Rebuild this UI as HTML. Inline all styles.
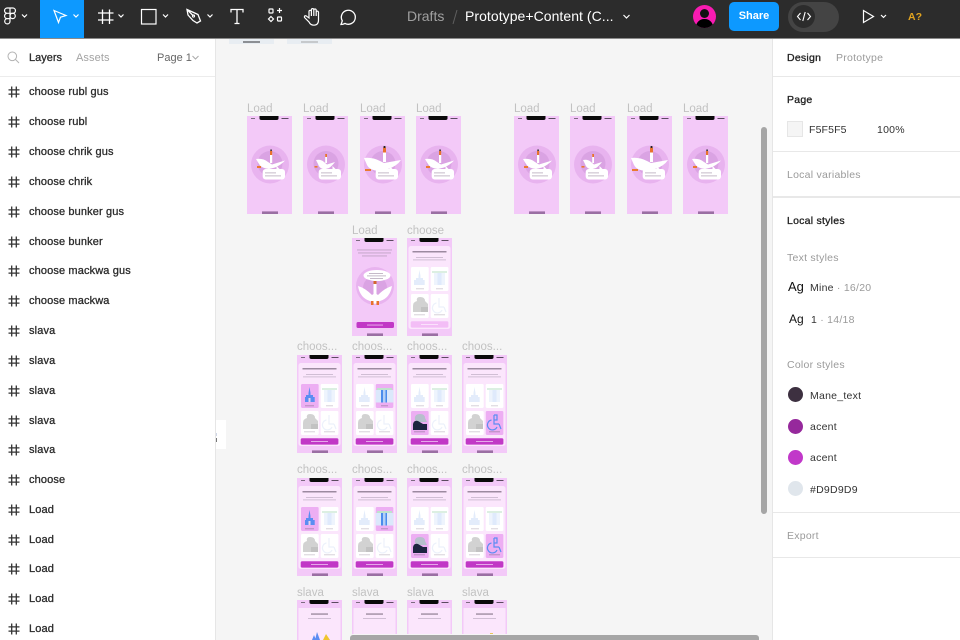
<!DOCTYPE html>
<html><head><meta charset="utf-8">
<style>
html,body{margin:0;padding:0;width:960px;height:640px;overflow:hidden;background:#f5f5f5;font-family:"Liberation Sans",sans-serif}
.a{position:absolute;white-space:nowrap}
#top{left:0;top:0;width:960px;height:38px;background:#2c2c2c;border-bottom:1px solid #8a8a8a}
#left{left:0;top:39px;width:215px;height:601px;background:#fff;border-right:1px solid #e6e6e6}
#right{left:772px;top:39px;width:188px;height:601px;background:#fff;border-left:1px solid #e6e6e6}
.l{left:29px;font-size:11px;line-height:14px;color:#2b2b2b;-webkit-text-stroke:.3px #2b2b2b;letter-spacing:.13px}
.h{left:7px;width:14px;height:14px}
.lab{font-size:11.5px;line-height:13px;color:#c2c2c2;letter-spacing:0}
.r{font-size:10.5px;line-height:14px;color:#333;letter-spacing:.25px}
.g{color:#9a9a9a}
.b{color:#222;-webkit-text-stroke:.3px #222}
.sep{left:773px;width:187px;height:1px;background:#e8e8e8}
</style></head><body>

<svg width="0" height="0" style="position:absolute">
<defs>
<symbol id="hash" viewBox="0 0 14 14"><path d="M4.7 1.5V12.5M9.3 1.5V12.5M1.5 4.9H12.5M1.5 9.1H12.5" stroke="#333" stroke-width="1.3" fill="none"/></symbol>

<g id="top">
<rect width="45" height="98" fill="#f3c9f8"/>
<path d="M12.5 0H31.5V2.5Q31.5 4 29.5 4H14.5Q12.5 4 12.5 2.5Z" fill="#0a0a0a"/>
<rect x="4" y="2" width="4" height="1" fill="#7c6a80"/>
<rect x="34.5" y="2" width="7" height="1" fill="#5b4a60"/>
<rect x="15" y="95.4" width="16" height="2.6" fill="#9a6fa3"/>
</g>

<g id="bub">
<rect x="15.7" y="53" width="22.3" height="10.5" rx="3" fill="#fff"/>
<path d="M29.5 53.5V50L33 53.5Z" fill="#fff"/>
<rect x="18" y="56.5" width="11" height=".8" fill="#b7a9bb"/>
<rect x="18" y="59.5" width="16" height=".8" fill="#b7a9bb"/>
</g>

<g id="gus">
<use href="#top"/>
<circle cx="23" cy="48.5" r="19" fill="#e8b3ef"/>
<circle cx="23" cy="47.5" r="12.5" fill="#daa3e3"/>
<path d="M9 43Q16 42 21 46L25 48.5L38 44.5Q34 49 28 51.5L22 53Q14 52 12 48Z" fill="#fff"/>
<rect x="23" y="37" width="2.2" height="10" fill="#fff"/>
<rect x="23" y="35" width="2.2" height="4" fill="#e8722c"/>
<rect x="23.3" y="33.5" width="1.6" height="1.5" fill="#333"/>
<rect x="10" y="50" width="4" height="2" fill="#ea7a2f"/>
<use href="#bub"/>
</g>

<g id="gus2">
<use href="#top"/>
<circle cx="23" cy="48.5" r="19" fill="#e8b3ef"/>
<circle cx="23" cy="47.5" r="12.5" fill="#daa3e3"/>
<path d="M13 44Q18 43 21 46L24 48.5L32 46Q29 50 26 52L21 53.5Q16 52 15 48Z" fill="#fff"/>
<rect x="22.2" y="39" width="1.8" height="8" fill="#fff"/>
<rect x="22.2" y="38" width="1.8" height="3" fill="#e8722c"/>
<rect x="11.5" y="50" width="3" height="1.6" fill="#ea7a2f"/>
<use href="#bub"/>
</g>

<g id="gus3">
<use href="#top"/>
<circle cx="23" cy="48.5" r="19" fill="#e8b3ef"/>
<circle cx="23" cy="47.5" r="12.5" fill="#daa3e3"/>
<path d="M4 42Q12 41 20 45L24 47L41 44Q37 50 28 53L21 55Q10 55 7 49Z" fill="#fff"/>
<rect x="23" y="33" width="3" height="13" fill="#fff"/>
<rect x="23" y="31.5" width="3" height="5" fill="#e8722c"/>
<rect x="23.6" y="30" width="1.8" height="2" fill="#222"/>
<rect x="5" y="53" width="6" height="2" fill="#ea7a2f"/>
<use href="#bub"/>
</g>

<g id="load2">
<use href="#top"/>
<rect x="5" y="11.5" width="35" height=".9" fill="#bfa3c4"/>
<rect x="6" y="14.5" width="33" height=".9" fill="#bfa3c4"/>
<rect x="10" y="17.5" width="25" height=".9" fill="#bfa3c4"/>
<circle cx="23" cy="48" r="19" fill="#e8b3ef"/>
<circle cx="23" cy="50" r="12" fill="#daa3e3"/>
<path d="M6 48Q13 50 20 57L23 55L26 57Q33 50 40 48Q38 60 28 63L23 66L18 63Q8 60 6 48Z" fill="#fff"/>
<rect x="21.5" y="44" width="3" height="13" fill="#fff"/>
<rect x="21.5" y="43" width="3" height="3" fill="#d2682e"/>
<rect x="19" y="63" width="2.5" height="4" fill="#e8722c"/><rect x="24.5" y="63" width="2.5" height="4" fill="#e8722c"/>
<ellipse cx="25" cy="37.5" rx="13.5" ry="5.5" fill="#fff"/>
<rect x="17" y="35" width="14" height=".8" fill="#b7a9bb"/>
<rect x="15" y="37.5" width="19" height=".8" fill="#b7a9bb"/>
<rect x="18" y="40" width="13" height=".8" fill="#b7a9bb"/>
<rect x="4.5" y="84" width="37.5" height="6" rx="1.5" fill="#c138c6"/>
<rect x="15" y="86.6" width="16" height=".9" fill="#eab4ee"/>
</g>

<g id="ch">
<use href="#top"/>
<rect x="1.5" y="8" width="42" height="83" rx="2.5" fill="#fbe6fc"/>
<rect x="5.5" y="13.2" width="34" height="1.2" fill="#857489"/>
<rect x="9" y="19" width="27" height=".8" fill="#c6b5ca"/>
<rect x="6" y="21.5" width="33" height=".8" fill="#c6b5ca"/>
<rect x="4" y="29" width="17.7" height="24" rx="1.2" fill="#fff"/>
<rect x="23.7" y="29" width="17.7" height="24" rx="1.2" fill="#fff"/>
<rect x="4" y="56" width="17.7" height="24" rx="1.2" fill="#fff"/>
<rect x="23.7" y="56" width="17.7" height="24" rx="1.2" fill="#fff"/>
<!-- church -->
<path d="M12.5 32L13.5 38V40H16V42H17.7V47H7V42H9V40H11.5V38Z" fill="#e3ecfb"/>
<!-- shop -->
<rect x="25" y="33" width="15" height="2" fill="#dcefe2"/>
<rect x="27" y="35" width="11" height="12" fill="#eef4fd"/>
<rect x="30.5" y="35" width="4" height="12" fill="#dfeafc"/>
<!-- man -->
<path d="M6 74V68Q6 64 10 63Q9 59 13 59Q18 59 18 63L21 66V74Z" fill="#d2d2d2"/>
<rect x="14" y="69" width="7" height="5" fill="#c2c2c2"/>
<!-- chair -->
<path d="M32 60V69H37M29.5 65A5 5 0 1 0 35 72M37 69L39 74" stroke="#ecf1fb" stroke-width="1.2" fill="none"/>
<rect x="9" y="50.5" width="8" height=".7" fill="#c5bcc9"/>
<rect x="29" y="50.5" width="7" height=".7" fill="#c5bcc9"/>
<rect x="7" y="76.5" width="11" height=".7" fill="#c5bcc9"/>
<rect x="27" y="76.5" width="11" height=".7" fill="#c5bcc9"/>
</g>

<g id="btn"><rect x="3.7" y="83.3" width="37.7" height="6.3" rx="1.5" fill="#c138c6"/><rect x="14" y="86" width="17" height=".9" fill="#eab4ee"/></g>

<g id="c0">
<use href="#ch"/><use href="#btn"/>
<rect x="4" y="29" width="17.7" height="24" rx="1.2" fill="#edaef3"/>
<path d="M12.5 32L13.5 38V40H16V42H17.7V47H8V42H9V40H11.5V38Z" fill="#5b8df2"/>
<rect x="11.5" y="43" width="2" height="4" fill="#e8d3f0"/>
<rect x="8" y="50.5" width="9" height=".7" fill="#9a7ca2"/>
</g>
<g id="c1">
<use href="#ch"/><use href="#btn"/>
<rect x="23.7" y="29" width="17.7" height="24" rx="1.2" fill="#edaef3"/>
<rect x="23.7" y="35" width="17.7" height="12.5" fill="#dbe8fb"/>
<rect x="25" y="33" width="15" height="2" fill="#bfe2cd"/>
<rect x="29" y="35" width="6" height="12.5" fill="#4a8cec"/>
<rect x="31" y="35" width="2.5" height="12.5" fill="#b2cff7"/>
<rect x="29" y="50.5" width="7" height=".7" fill="#9a7ca2"/>
</g>
<g id="c2">
<use href="#ch"/><use href="#btn"/>
<rect x="4" y="56" width="17.7" height="24" rx="1.2" fill="#edaef3"/>
<path d="M8 65Q7 59 13 59Q18 59 18 63L20 67H10Z" fill="#b6bfcc"/>
<path d="M6 75V69Q7 65 11 66L16 69H20V75Z" fill="#1d2440"/>
<rect x="7" y="76.5" width="11" height=".7" fill="#9a7ca2"/>
</g>
<g id="c3">
<use href="#ch"/><use href="#btn"/>
<rect x="23.7" y="56" width="17.7" height="24" rx="1.2" fill="#edaef3"/>
<path d="M32 60H35V65H32M32 60V69H37M29.5 65A5 5 0 1 0 35 72M37 69L39 74" stroke="#5b8df2" stroke-width="1.2" fill="none"/>
<rect x="27" y="76.5" width="11" height=".7" fill="#9a7ca2"/>
</g>
<g id="cd">
<use href="#ch"/>
<rect x="3.7" y="83.3" width="37.7" height="6.3" rx="1.5" fill="#f3bdf6"/>
<rect x="14" y="86" width="17" height=".9" fill="#fbe6fc"/>
</g>
<g id="sl">
<rect width="45" height="40" fill="#f3c9f8"/>
<path d="M12.5 0H31.5V2.5Q31.5 4 29.5 4H14.5Q12.5 4 12.5 2.5Z" fill="#0a0a0a"/>
<rect x="4" y="2" width="4" height="1" fill="#7c6a80"/>
<rect x="34.5" y="2" width="7" height="1" fill="#5b4a60"/>
<rect x="1.5" y="8" width="42" height="32" fill="#fbe6fc"/>
<rect x="14" y="13.5" width="17" height="1.1" fill="#857489"/>
<rect x="11" y="18" width="23" height=".8" fill="#c6b5ca"/>
</g>
</defs>
</svg>

<!-- canvas -->
<div class="a" style="left:229px;top:39px;width:45px;height:5px;background:#e8edf2"></div>
<div class="a" style="left:243px;top:41px;width:17px;height:2px;background:#8c8f94"></div>
<div class="a" style="left:287px;top:39px;width:45px;height:5px;background:#e8edf2"></div>
<div class="a" style="left:301px;top:41px;width:17px;height:2px;background:#c6c9cc"></div>

<div class="a lab" style="left:247px;top:103px">Load</div>
<div class="a lab" style="left:303px;top:103px">Load</div>
<div class="a lab" style="left:360px;top:103px">Load</div>
<div class="a lab" style="left:416px;top:103px">Load</div>
<div class="a lab" style="left:514px;top:103px">Load</div>
<div class="a lab" style="left:570px;top:103px">Load</div>
<div class="a lab" style="left:627px;top:103px">Load</div>
<div class="a lab" style="left:683px;top:103px">Load</div>
<div class="a lab" style="left:352px;top:225px">Load</div>
<div class="a lab" style="left:407px;top:225px">choose</div>
<div class="a lab" style="left:297px;top:341px">choos...</div>
<div class="a lab" style="left:352px;top:341px">choos...</div>
<div class="a lab" style="left:407px;top:341px">choos...</div>
<div class="a lab" style="left:462px;top:341px">choos...</div>
<div class="a lab" style="left:297px;top:464px">choos...</div>
<div class="a lab" style="left:352px;top:464px">choos...</div>
<div class="a lab" style="left:407px;top:464px">choos...</div>
<div class="a lab" style="left:462px;top:464px">choos...</div>
<div class="a lab" style="left:297px;top:587px">slava</div>
<div class="a lab" style="left:352px;top:587px">slava</div>
<div class="a lab" style="left:407px;top:587px">slava</div>
<div class="a lab" style="left:462px;top:587px">slava</div>

<svg class="a" style="left:0;top:0;filter:blur(.35px)" width="960" height="640">
<use href="#gus" x="247" y="116"/><use href="#gus2" x="303" y="116"/><use href="#gus3" x="360" y="116"/><use href="#gus" x="416" y="116"/>
<use href="#gus" x="514" y="116"/><use href="#gus2" x="570" y="116"/><use href="#gus3" x="627" y="116"/><use href="#gus" x="683" y="116"/>
<use href="#load2" x="352" y="238"/><use href="#cd" x="407" y="238"/>
<use href="#c0" x="297" y="355"/><use href="#c1" x="352" y="355"/><use href="#c2" x="407" y="355"/><use href="#c3" x="462" y="355"/>
<use href="#c0" x="297" y="478"/><use href="#c1" x="352" y="478"/><use href="#c2" x="407" y="478"/><use href="#c3" x="462" y="478"/>
<use href="#sl" x="297" y="600"/><use href="#sl" x="352" y="600"/><use href="#sl" x="407" y="600"/><use href="#sl" x="462" y="600"/>
<path d="M315 640L317 632L320 640ZM312 640L314 635L316 640Z" fill="#5b8df2"/>
<path d="M323 640L326 634L330 640Z" fill="#f0c52d"/>
<path d="M422 640Q429 628 437 640Z" fill="#7a97b8"/>
<rect x="482" y="634" width="10" height="6" fill="#3f6fc4"/>
<rect x="490" y="633" width="3" height="7" fill="#e9c65a"/>
</svg>

<div class="a" style="left:216px;top:420px;width:10px;height:29px;background:#fff"></div>
<div class="a" style="left:215px;top:433px;width:2px;height:3px;background:#cfd6e6"></div>
<div class="a" style="left:215px;top:438px;width:2px;height:4px;background:#777"></div>

<!-- scrollbars -->
<div class="a" style="left:761px;top:127px;width:6px;height:387px;border-radius:3px;background:#a6a6a6;box-shadow:0 0 0 1px #f5f5f5"></div>
<div class="a" style="left:350px;top:635px;width:409px;height:5px;border-radius:3px 3px 0 0;background:#a6a6a6;box-shadow:0 0 0 1px #f5f5f5"></div>

<!-- top bar -->
<div class="a" id="top"></div>
<div class="a" style="left:40px;top:0;width:44px;height:38px;background:#0d99ff"></div>
<svg class="a" style="left:0;top:0" width="960" height="38" fill="none" stroke="#fff" stroke-width="1.2">
<!-- figma logo -->
<path d="M10 8H7.2A2.65 2.65 0 0 0 7.2 13.3H10ZM10 8H12.8A2.65 2.65 0 0 1 12.8 13.3H10ZM10 13.3H7.2A2.65 2.65 0 0 0 7.2 18.6H10ZM7.2 18.6H10V21.2A2.65 2.65 0 1 1 7.2 18.6Z" stroke-width="1.2"/>
<circle cx="12.65" cy="15.95" r="2.65"/>
<path d="M22 14.5L24.5 17L27 14.5M73.5 14.5L76 17L78.5 14.5M118.5 14.5L121 17L123.5 14.5M163 14.5L165.5 17L168 14.5M207.5 14.5L210 17L212.5 14.5"/>
<!-- arrow -->
<path d="M54 10.5L66 15.5L60.5 17.2L58.5 22.5Z"/>
<!-- frame -->
<path d="M102.5 9.5V24M109.5 9.5V24M98 13H113.5M98 20H113.5" stroke-width="1.3"/>
<!-- rect -->
<rect x="141.5" y="9.5" width="14.5" height="14.5"/>
<!-- pen -->
<path d="M187 9.5L198 14.5L200.5 21L197 23L193 20.5L188 15ZM187 9.5L193.5 16M193 20.5L197 23" stroke-width="1.3"/><circle cx="193.5" cy="16" r="1.1" stroke-width="1"/>
<!-- T -->
<path d="M231 12.5V9.5H243V12.5M237 9.5V23.5M234.5 23.5H239.5" stroke-width="1.3"/>
<!-- resources -->
<rect x="269" y="9" width="4" height="4" rx=".6"/>
<path d="M279.5 8V13M277 10.5H282"/>
<path d="M271 16.5L273.5 19L271 21.5L268.5 19Z"/>
<rect x="277.5" y="17" width="4" height="4" rx=".6"/>
<!-- hand -->
<path d="M309 16V11.5A1.2 1.2 0 0 1 311.4 11.5V16M311.4 16V9.8A1.2 1.2 0 0 1 313.8 9.8V16M313.8 16V10.2A1.2 1.2 0 0 1 316.2 10.2V16M316.2 16V12A1.2 1.2 0 0 1 318.5 12V20Q318.5 25 314 25.2Q310.5 25.2 309 22L304.5 17.5Q304 15.5 306 15.8L309 18V16" stroke-width="1.2"/>
<!-- comment -->
<path d="M341 24.5L342.3 20.8A7 7 0 1 1 345 23.4Q343 24.5 341 24.5Z" stroke-width="1.3"/>
<!-- play -->
<path d="M863.5 10.5V22.5L873.5 16.5Z" stroke-width="1.2"/>
<path d="M881 15L883.5 17.4L886 15"/>
</svg>
<div class="a" style="left:407px;top:7px;font-size:14px;line-height:18px;color:#a0a0a0">Drafts</div>
<svg class="a" style="left:450px;top:9px" width="10" height="18"><path d="M7 1L3 15" stroke="#5f5f5f" stroke-width="1"/></svg>
<div class="a" style="left:465px;top:7px;font-size:14px;line-height:19px;color:#fff;letter-spacing:.05px">Prototype+Content (C...</div>
<!-- avatar -->
<div class="a" style="left:693px;top:5px;width:23px;height:23px;border-radius:50%;background:#f81bb2;overflow:hidden">
<div style="position:absolute;left:7px;top:4px;width:9px;height:9px;border-radius:50%;background:#111"></div>
<div style="position:absolute;left:3px;top:14px;width:17px;height:9px;border-radius:8px 8px 0 0;background:#000"></div>
</div>
<div class="a" style="left:729px;top:2px;width:50px;height:29px;border-radius:5px;background:#0d99ff;color:#fff;font-size:11px;font-weight:bold;line-height:29px;text-align:center">Share</div>
<div class="a" style="left:788px;top:2px;width:51px;height:30px;border-radius:15px;background:#444"></div>
<div class="a" style="left:792px;top:5px;width:23px;height:23px;border-radius:50%;background:#2c2c2c"></div>
<svg class="a" style="left:796px;top:9px" width="16" height="15" fill="none" stroke="#fff" stroke-width="1.1"><path d="M4.5 4L1.5 7.5L4.5 11M11.5 4L14.5 7.5L11.5 11M9.2 3L6.8 12"/></svg>
<div class="a" style="left:908px;top:10px;font-size:10.5px;line-height:14px;color:#e2a41f;font-weight:bold">A?</div>
<svg class="a" style="left:622px;top:12px" width="12" height="10" fill="none" stroke="#fff" stroke-width="1.2"><path d="M1.5 3L4.5 6L7.5 3"/></svg>

<!-- left panel -->
<div class="a" id="left"></div>
<div class="a" style="left:0;top:76px;width:215px;height:1px;background:#ececec"></div>
<svg class="a" style="left:7px;top:51px" width="13" height="13" fill="none" stroke="#b4b4b4" stroke-width="1"><circle cx="5.3" cy="5.3" r="4.3"/><path d="M8.4 8.4L12 12"/></svg>
<div class="a l" style="left:29px;top:51px;letter-spacing:0">Layers</div>
<div class="a" style="left:76px;top:51px;font-size:11px;line-height:14px;color:#a3a3a3;letter-spacing:.1px">Assets</div>
<div class="a" style="left:157px;top:51px;font-size:11px;line-height:14px;color:#666;letter-spacing:0">Page 1</div>
<svg class="a" style="left:191px;top:54px" width="9" height="8" fill="none" stroke="#aaa" stroke-width="1"><path d="M1.5 2L4.5 5L7.5 2"/></svg>

<svg class="a h" style="top:85px"><use href="#hash"/></svg><div class="a l" style="top:85px">choose rubl gus</div>
<svg class="a h" style="top:115px"><use href="#hash"/></svg><div class="a l" style="top:115px">choose rubl</div>
<svg class="a h" style="top:145px"><use href="#hash"/></svg><div class="a l" style="top:145px">choose chrik gus</div>
<svg class="a h" style="top:175px"><use href="#hash"/></svg><div class="a l" style="top:175px">choose chrik</div>
<svg class="a h" style="top:205px"><use href="#hash"/></svg><div class="a l" style="top:205px">choose bunker gus</div>
<svg class="a h" style="top:235px"><use href="#hash"/></svg><div class="a l" style="top:235px">choose bunker</div>
<svg class="a h" style="top:264px"><use href="#hash"/></svg><div class="a l" style="top:264px">choose mackwa gus</div>
<svg class="a h" style="top:294px"><use href="#hash"/></svg><div class="a l" style="top:294px">choose mackwa</div>
<svg class="a h" style="top:324px"><use href="#hash"/></svg><div class="a l" style="top:324px">slava</div>
<svg class="a h" style="top:354px"><use href="#hash"/></svg><div class="a l" style="top:354px">slava</div>
<svg class="a h" style="top:384px"><use href="#hash"/></svg><div class="a l" style="top:384px">slava</div>
<svg class="a h" style="top:414px"><use href="#hash"/></svg><div class="a l" style="top:414px">slava</div>
<svg class="a h" style="top:443px"><use href="#hash"/></svg><div class="a l" style="top:443px">slava</div>
<svg class="a h" style="top:473px"><use href="#hash"/></svg><div class="a l" style="top:473px">choose</div>
<svg class="a h" style="top:503px"><use href="#hash"/></svg><div class="a l" style="top:503px">Load</div>
<svg class="a h" style="top:533px"><use href="#hash"/></svg><div class="a l" style="top:533px">Load</div>
<svg class="a h" style="top:562px"><use href="#hash"/></svg><div class="a l" style="top:562px">Load</div>
<svg class="a h" style="top:592px"><use href="#hash"/></svg><div class="a l" style="top:592px">Load</div>
<svg class="a h" style="top:622px"><use href="#hash"/></svg><div class="a l" style="top:622px">Load</div>

<!-- right panel -->
<div class="a" id="right"></div>
<div class="a sep" style="top:76px"></div>
<div class="a sep" style="top:151px"></div>
<div class="a sep" style="top:196px;height:2px"></div>
<div class="a sep" style="top:512px"></div>
<div class="a sep" style="top:557px"></div>
<div class="a r b" style="left:787px;top:51px">Design</div>
<div class="a r g" style="left:836px;top:51px">Prototype</div>
<div class="a r b" style="left:787px;top:93px">Page</div>
<div class="a" style="left:787px;top:121px;width:14px;height:14px;background:#f5f5f5;border:1px solid #e6e6e6"></div>
<div class="a r" style="left:809px;top:123px;letter-spacing:.15px">F5F5F5</div>
<div class="a r" style="left:877px;top:123px">100%</div>
<div class="a r g" style="left:787px;top:168px">Local variables</div>
<div class="a r b" style="left:787px;top:214px">Local styles</div>
<div class="a r g" style="left:787px;top:251px">Text styles</div>
<div class="a" style="left:788px;top:279px;font-size:13px;line-height:16px;color:#111">Ag</div>
<div class="a r" style="left:810px;top:281px">Mine<span class="g"> · 16/20</span></div>
<div class="a" style="left:789px;top:312px;font-size:12px;line-height:15px;color:#111">Ag</div>
<div class="a r" style="left:811px;top:313px">1<span class="g"> · 14/18</span></div>
<div class="a r g" style="left:787px;top:358px">Color styles</div>
<div class="a" style="left:788px;top:387px;width:15px;height:15px;border-radius:50%;background:#3d3040"></div>
<div class="a r" style="left:810px;top:389px">Mane_text</div>
<div class="a" style="left:788px;top:419px;width:15px;height:15px;border-radius:50%;background:#96299c"></div>
<div class="a r" style="left:810px;top:420px">acent</div>
<div class="a" style="left:788px;top:450px;width:15px;height:15px;border-radius:50%;background:#c138c9"></div>
<div class="a r" style="left:810px;top:451px">acent</div>
<div class="a" style="left:788px;top:481px;width:15px;height:15px;border-radius:50%;background:#e0e6ec"></div>
<div class="a r" style="left:810px;top:483px">#D9D9D9</div>
<div class="a r g" style="left:787px;top:529px">Export</div>
</body></html>
